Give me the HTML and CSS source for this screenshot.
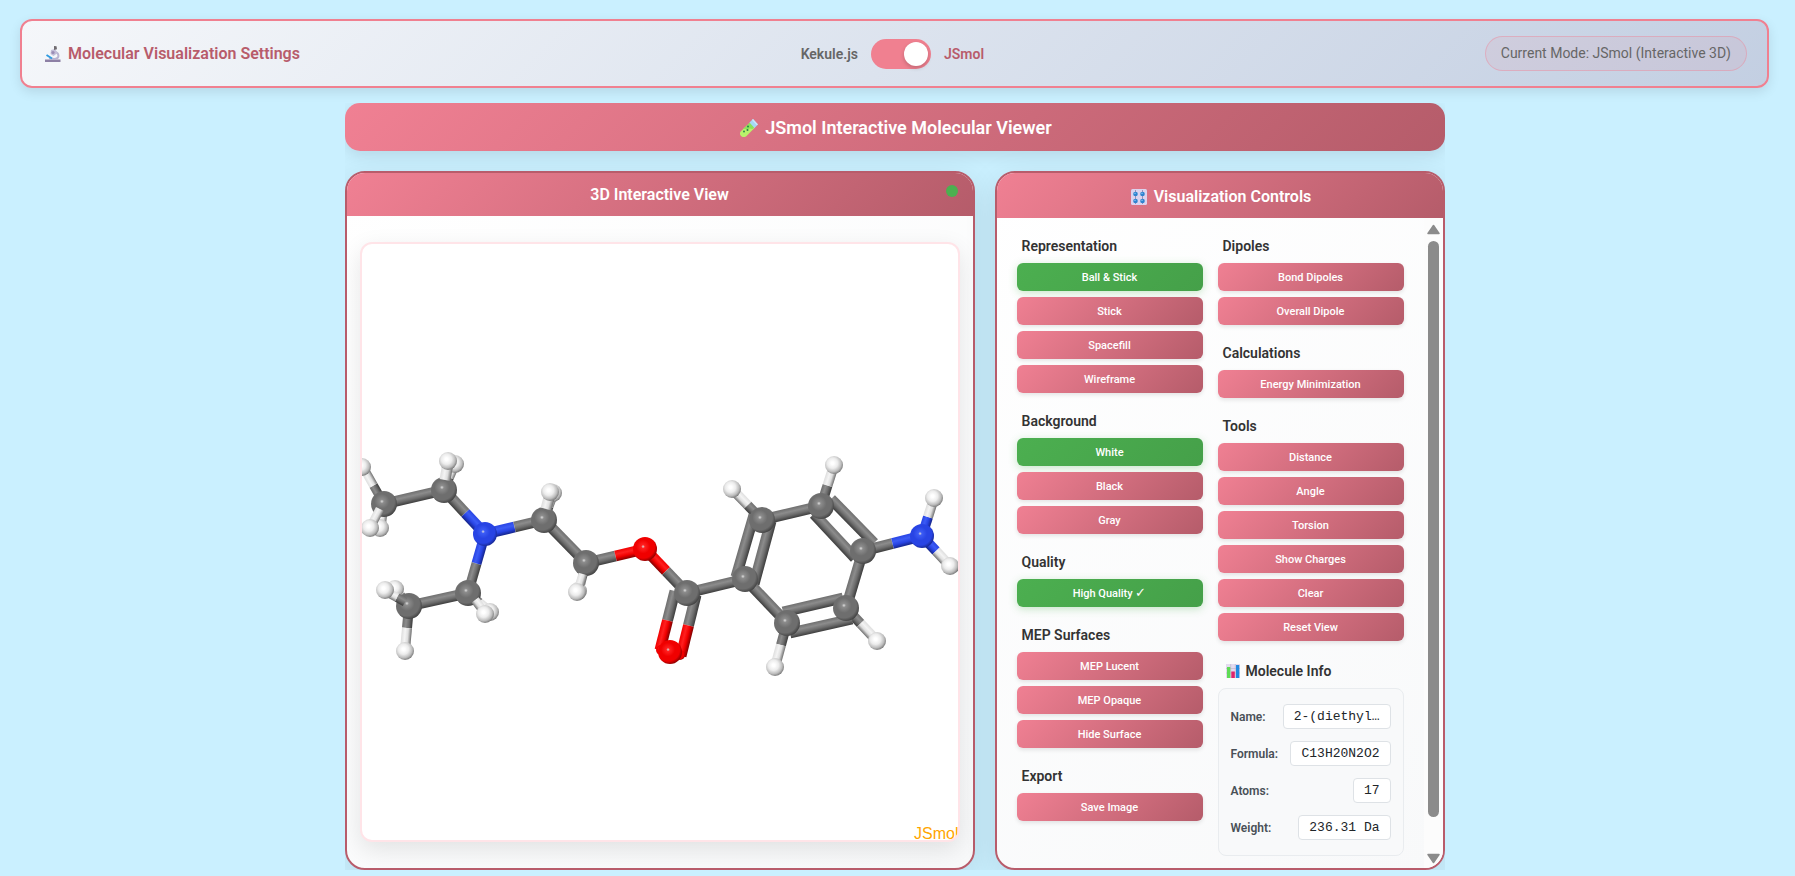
FILE: index.html
```html
<!DOCTYPE html>
<html lang="en">
<head>
<meta charset="utf-8">
<title>Molecular Viewer</title>
<link rel="stylesheet" href="styles.css">
</head>
<body>
<header class="settings">
  <h1 class="settings-title">
    <svg class="emoji emoji-16" viewBox="0 0 16 16" aria-hidden="true"><path d="M0 13.500h15.500V16H0z" fill="#8d80a5"/><path d="M9 5.500c5.500 1 6 7 1 7.500l-6-.2" fill="none" stroke="#b9b3d1" stroke-width="2"/><path d="M6 4l4-1 2.500 4-4 3-3-2z" fill="#c3bdd8"/><path d="M9 0l2.500.3.500 3-3 .7z" fill="#6f6b70"/><circle cx="8" cy="6.500" r="1.600" fill="#9a8db5"/><path d="M1.500 9l5.500 3.500" stroke="#2f9be0" stroke-width="2"/></svg>
    Molecular Visualization Settings
  </h1>
  <div class="mode-switch">
    <label for="engine">Kekule.js</label>
    <input class="toggle" type="checkbox" id="engine" role="switch" checked>
    <label for="engine" class="active">JSmol</label>
  </div>
  <div class="mode-pill">Current Mode: JSmol (Interactive 3D)</div>
</header>

<main class="viewer">
  <h2 class="viewer-title">
    <svg class="emoji emoji-18" viewBox="0 0 18 18" aria-hidden="true"><path d="M10 3.500l5 5-9 9q-3 1.500-5-.5t-.3-4.600z" fill="#b9f26b"/><path d="M3 10l7-6.500 4.500 4.500-2 2q-3-1-4 0t-3 0z" fill="#8ce05c"/><path d="M9.500 3.500L13 0l5 5.500-3.500 3.500z" fill="#a5d8f5"/><path d="M13 0l5 5.500-1.500.5L12 1z" fill="#cbeafc"/><circle cx="4" cy="12.500" r="1" fill="#2b8c4b"/><circle cx="7.500" cy="11" r="1" fill="#27824a"/><circle cx="8" cy="7.500" r="1" fill="#27824a"/></svg>
    JSmol Interactive Molecular Viewer
  </h2>
  <div class="panels">
    <section class="panel">
      <h3 class="panel-title">3D Interactive View<span class="status-dot"></span></h3>
      <div class="view-body">
        <div class="canvas">
          <svg id="molecule" class="molecule" viewBox="362 244 596 596" role="img" aria-label="Ball and stick model"></svg>
        </div>
      </div>
    </section>

    <section class="panel">
      <h3 class="panel-title with-icon">
        <svg class="emoji emoji-16" viewBox="0 0 16 16" aria-hidden="true"><rect width="16" height="16" rx="1.500" fill="#dcd3ee"/><path d="M4.500 1v14M11.500 1v14" stroke="#9c92b8"/><circle cx="4.500" cy="5" r="2.300" fill="#2f83cf"/><circle cx="11.500" cy="5" r="2.300" fill="#2f83cf"/><circle cx="4.500" cy="12" r="2.300" fill="#2f83cf"/><circle cx="11.500" cy="12" r="2.300" fill="#2f83cf"/><path d="M3 4.300h2M10 4.300h2M3 11.300h2M10 11.300h2" stroke="#75b9ee"/></svg>
        Visualization Controls
      </h3>
      <div class="controls-scroll">
        <div class="controls">
          <div class="column">
            <div class="group"><h4>Representation</h4>
              <button class="btn on">Ball &amp; Stick</button><button class="btn">Stick</button><button class="btn">Spacefill</button><button class="btn">Wireframe</button></div>
            <div class="group"><h4>Background</h4>
              <button class="btn on">White</button><button class="btn">Black</button><button class="btn">Gray</button></div>
            <div class="group"><h4>Quality</h4>
              <button class="btn on">High Quality <span class="tick">✓</span></button></div>
            <div class="group"><h4>MEP Surfaces</h4>
              <button class="btn">MEP Lucent</button><button class="btn">MEP Opaque</button><button class="btn">Hide Surface</button></div>
            <div class="group"><h4>Export</h4>
              <button class="btn">Save Image</button></div>
          </div>
          <div class="column">
            <div class="group"><h4>Dipoles</h4>
              <button class="btn">Bond Dipoles</button><button class="btn">Overall Dipole</button></div>
            <div class="group"><h4>Calculations</h4>
              <button class="btn">Energy Minimization</button></div>
            <div class="group"><h4>Tools</h4>
              <button class="btn">Distance</button><button class="btn">Angle</button><button class="btn">Torsion</button><button class="btn">Show Charges</button><button class="btn">Clear</button><button class="btn">Reset View</button></div>
            <div class="group">
              <h4 class="info-title"><svg class="emoji emoji-14" viewBox="0 0 14 14" aria-hidden="true"><rect width="14" height="14" fill="#e3dbef"/><path d="M0 4.500h14M0 9h14M4.700 0v14M9.300 0v14" stroke="#b9b0cd" stroke-width=".6"/><rect x="1" y="3" width="3.300" height="11" fill="#5fdc55"/><rect x="5.300" y="7.500" width="3.500" height="6.500" fill="#e0246c"/><rect x="10" y="1" width="3.300" height="13" fill="#2089e0"/></svg>Molecule Info</h4>
              <dl class="info">
                <div><dt>Name:</dt><dd>2-(diethyl…</dd></div>
                <div><dt>Formula:</dt><dd>C13H20N2O2</dd></div>
                <div><dt>Atoms:</dt><dd>17</dd></div>
                <div><dt>Weight:</dt><dd>236.31 Da</dd></div>
              </dl>
            </div>
          </div>
        </div>
        <div class="scrollbar" aria-hidden="true">
          <svg width="13" height="11" viewBox="0 0 13 11"><path d="M6.500 1.500L12 9.500H1z" fill="#8b8b8b" stroke="#8b8b8b" stroke-width="1.500" stroke-linejoin="round"/></svg>
          <div class="track"><div class="thumb"></div></div>
          <svg width="13" height="11" viewBox="0 0 13 11"><path d="M6.500 9.500L12 1.500H1z" fill="#8b8b8b" stroke="#8b8b8b" stroke-width="1.500" stroke-linejoin="round"/></svg>
        </div>
      </div>
    </section>
  </div>
</main>
<script src="molecule.js"></script>
</body>
</html>
```
FILE: styles.css
```css
* { box-sizing: border-box; }

body {
  margin: 0;
  padding: 19px 26px 6px 20px;
  background: #caf0ff;
  font-family: Roboto, "Liberation Sans", sans-serif;
  color: #333;
}

h1, h2, h3, h4, dl, dd { margin: 0; }

.emoji { flex: none; margin: 0 3px; }
.emoji-14 { width: 14px; height: 14px; }
.emoji-16 { width: 16px; height: 16px; }
.emoji-18 { width: 18px; height: 18px; }

.settings {
  display: flex;
  align-items: center;
  justify-content: space-between;
  padding: 15px 20px;
  border: 2px solid #f08090;
  border-radius: 12px;
  background: linear-gradient(135deg, #f5f7fa, #c3cfe2);
  box-shadow: 0 4px 12px rgba(0, 0, 0, .1);
}

.settings-title {
  display: flex;
  align-items: center;
  gap: 4px;
  color: #b85c6b;
  font-size: 16px;
  font-weight: 600;
}

.mode-switch {
  display: flex;
  align-items: center;
  gap: 13px;
  color: #666;
  font-size: 14px;
  font-weight: 600;
}
.mode-switch .active { color: #b85c6b; }

.toggle {
  appearance: none;
  display: flex;
  justify-content: flex-end;
  width: 60px;
  height: 30px;
  margin: 0;
  padding: 3px;
  border-radius: 15px;
  background: #f08090;
}
.toggle::before {
  content: "";
  width: 24px;
  height: 24px;
  border-radius: 50%;
  background: #fff;
  box-shadow: 0 2px 4px rgba(0, 0, 0, .2);
}

.mode-pill {
  padding: 8px 15px;
  border: 1px solid rgba(240, 128, 144, .4);
  border-radius: 20px;
  background: rgba(240, 128, 144, .1);
  color: #666;
  font-size: 14px;
  line-height: 17px;
}

.viewer {
  max-width: 1100px;
  margin: 15px auto 0;
  overflow: hidden;
}

.viewer-title {
  display: flex;
  align-items: center;
  justify-content: center;
  gap: 4px;
  padding: 13px 12px 11px;
  border-radius: 15px;
  background: linear-gradient(135deg, #f08093, #b55c6a);
  box-shadow: 0 4px 15px rgba(0, 0, 0, .1);
  color: #fff;
  font-size: 18px;
  font-weight: 600;
  line-height: 24px;
}

.panels {
  display: grid;
  grid-template-columns: 7fr 5fr;
  gap: 20px;
  margin-top: 20px;
}

.panel {
  display: flex;
  flex-direction: column;
  overflow: hidden;
  border: 2px solid #b85c6b;
  border-radius: 20px;
  background: linear-gradient(145deg, #fff, #f8f9fa);
  box-shadow: 0 8px 32px rgba(0, 0, 0, .1);
}

.panel-title {
  position: relative;
  display: flex;
  align-items: center;
  justify-content: center;
  gap: 4px;
  padding: 12px 15px;
  background: linear-gradient(135deg, #f08093, #b55c6a);
  color: #fff;
  font-size: 16px;
  font-weight: 600;
  line-height: 19px;
}
.panel-title.with-icon {
  padding: 13px 15px 11px;
  line-height: 21px;
}

.status-dot {
  position: absolute;
  top: 12px;
  right: 15px;
  width: 12px;
  height: 12px;
  border-radius: 50%;
  background: #4caf50;
}

.view-body { padding: 26px 13px; }

.canvas {
  overflow: hidden;
  border: 2px solid #ffe4e8;
  border-radius: 12px;
  background: #fff;
  box-shadow: 0 8px 24px rgba(0, 0, 0, .1);
}
.molecule { display: block; width: 100%; }
.credit { font: 16px "Liberation Sans", Arial, sans-serif; fill: #ffa500; }

.controls-scroll { display: flex; flex: 1; }

.controls {
  flex: 1;
  display: grid;
  grid-template-columns: 1fr 1fr;
  gap: 15px;
  padding: 20px 20px 0;
}

.column, .group { display: flex; flex-direction: column; }
.column { gap: 20px; min-width: 0; }
.group { gap: 6px; }

.group h4 {
  margin-bottom: 2px;
  padding-left: 5px;
  font-size: 14px;
  font-weight: 600;
  line-height: 17px;
}
.group .info-title {
  display: flex;
  align-items: center;
  gap: 3px;
  padding-top: 1px;
  line-height: 18px;
}

.btn {
  height: 28px;
  padding: 0 12px;
  border: 0;
  border-radius: 6px;
  background: linear-gradient(135deg, #f08093, #b55c6a);
  box-shadow: 0 2px 4px rgba(0, 0, 0, .1);
  color: #fff;
  font: 500 11px Roboto, "Liberation Sans", sans-serif;
}
.btn.on {
  background: linear-gradient(135deg, #4caf50, #45a049);
  box-shadow: 0 2px 8px rgba(76, 175, 80, .3);
}
.tick { font-size: 13px; line-height: 11px; }

.info {
  display: grid;
  gap: 12px;
  padding: 15px 12px;
  border: 1px solid #e9ecef;
  border-radius: 8px;
  background: #f8f9fa;
  font-size: 12px;
}
.info div {
  display: flex;
  align-items: center;
  justify-content: space-between;
}
.info dt { color: #495057; font-weight: 600; }
.info dd {
  padding: 4px 10px;
  border: 1px solid #dee2e6;
  border-radius: 4px;
  background: #fff;
  color: #212529;
  font: 13px/15px "Liberation Mono", "Courier New", monospace;
  white-space: nowrap;
}

.scrollbar {
  display: flex;
  flex-direction: column;
  align-items: center;
  gap: 6px;
  width: 19px;
  padding: 6px 2px 4px;
  background: #fcfcfc;
}
.track { flex: 1; }
.thumb {
  width: 11px;
  height: 95%;
  border-radius: 6px;
  background: #8b8b8b;
}
```
FILE: molecule.js
```js
const NS = "http://www.w3.org/2000/svg";
const svg = document.getElementById("molecule");
const tones = {
  C: ["#8c8c8c", "#6e6e6e", "#3c3c3c"],
  N: ["#3c5cf5", "#2844e4", "#14248a"],
  O: ["#ff2020", "#f00000", "#800000"],
  H: ["#ffffff", "#dedede", "#6e6e6e"]
};
const radius = { C: 13, N: 12, O: 12, H: 9 };

function add(parent, tag, attrs) {
  const el = document.createElementNS(NS, tag);
  for (const k in attrs) el.setAttribute(k, attrs[k]);
  parent.appendChild(el);
  return el;
}

function stops(grad, list) {
  for (const [offset, color] of list) add(grad, "stop", { offset, "stop-color": color });
}

const defs = add(svg, "defs", {});
for (const k in tones) {
  const [light, mid, dark] = tones[k];
  stops(add(defs, "radialGradient", { id: "atom" + k, cx: .42, cy: .4, r: .64 }), [
    [0, k === "H" ? "#fff" : "#dddddd"], [.12, k === "H" ? "#fff" : light],
    [.45, k === "H" ? "#ececec" : mid], [.75, k === "H" ? "#bcbcbc" : mid], [1, dark]
  ]);
}

let count = 0;
function rod(x1, y1, x2, y2, kind, width) {
  const len = Math.hypot(x2 - x1, y2 - y1);
  let nx = -(y2 - y1) / len, ny = (x2 - x1) / len;
  if (nx + ny * 1.5 < 0) { nx = -nx; ny = -ny; }
  const h = width / 2, id = "rod" + count++;
  const [light, mid, dark] = tones[kind];
  const grad = add(defs, "linearGradient", {
    id, gradientUnits: "userSpaceOnUse",
    x1: x1 - nx * h, y1: y1 - ny * h, x2: x1 + nx * h, y2: y1 + ny * h
  });
  stops(grad, [[0, mid], [.35, kind === "H" ? "#f4f4f4" : light], [.65, mid], [1, dark]]);
  const p = [[x1 - nx * h, y1 - ny * h], [x2 - nx * h, y2 - ny * h], [x2 + nx * h, y2 + ny * h], [x1 + nx * h, y1 + ny * h]];
  add(svg, "polygon", { points: p.join(" "), fill: `url(#${id})` });
}

function bond(a, b, x1, y1, x2, y2, split = .5, width = 10) {
  const mx = x1 + (x2 - x1) * split, my = y1 + (y2 - y1) * split;
  if (a === b) return rod(x1, y1, x2, y2, a, width);
  rod(x1, y1, mx, my, a, width);
  rod(mx, my, x2, y2, b, width);
}

function atom(kind, x, y, r = radius[kind]) {
  add(svg, "circle", { cx: x, cy: y, r, fill: `url(#atom${kind})` });
}

/* diethylamino group */
bond("C", "H", 384, 504, 363, 467, .5, 9); atom("H", 362, 467);
bond("C", "H", 384, 504, 381, 528, .5, 9); atom("H", 380, 528);
bond("C", "C", 384, 504, 444, 490, .5, 11); atom("C", 384, 504);
bond("H", "H", 380, 509, 371, 526, .5, 9); atom("H", 370, 528);
bond("C", "H", 444, 490, 455, 465, .5, 9); atom("H", 455, 464);
bond("C", "N", 444, 490, 485, 534, .52, 11); atom("C", 444, 490);
bond("H", "H", 445, 480, 448, 463, .5, 11); atom("H", 448, 461);

bond("C", "H", 409, 606, 395, 588, .6, 9); atom("H", 395, 589);
bond("C", "C", 409, 606, 468, 593, .5, 11);
bond("C", "H", 409, 606, 405, 650, .5);
atom("C", 409, 606); atom("H", 405, 651);
bond("C", "H", 405, 602, 385, 591, .4, 9); atom("H", 385, 590);
bond("C", "N", 468, 593, 485, 534, .5);
bond("C", "H", 468, 593, 491, 612, .5, 9); atom("H", 490, 612);
atom("C", 468, 593);
bond("H", "H", 475, 600, 485, 613, .5, 9); atom("H", 485, 614);

/* ethyl ester chain */
bond("N", "C", 485, 534, 544, 520, .5, 11); atom("N", 485, 534);
bond("C", "H", 544, 520, 554, 493, .5, 9); atom("H", 553, 493);
bond("C", "C", 544, 520, 586, 563, .5, 11); atom("C", 544, 520);
bond("H", "H", 546, 509, 550, 494, .5, 11); atom("H", 550, 492);
bond("C", "O", 586, 563, 645, 549, .5, 11);
bond("C", "H", 586, 563, 579, 591, .5, 9); atom("H", 578, 591);
atom("C", 586, 563);
bond("H", "H", 583, 574, 578, 590, .5, 9); atom("H", 577, 592);
bond("O", "C", 645, 549, 687, 593, .5, 11); atom("O", 645, 549);
bond("C", "O", 675, 591, 660, 650, .5, 11);
bond("C", "O", 696, 595, 681, 656, .5, 11);
atom("O", 661, 650, 5); atom("O", 680, 655, 5);
bond("C", "C", 687, 593, 745, 579, .5, 11); atom("C", 687, 593);
atom("O", 670, 652);

/* aminobenzene ring */
bond("C", "H", 762, 520, 732, 489, .48);
bond("C", "H", 821, 506, 834, 465, .5);
bond("C", "H", 846, 608, 877, 641, .47);
bond("C", "H", 787, 623, 775, 667, .5);
bond("C", "C", 754, 515, 736, 577, .5, 11);
bond("C", "C", 771, 521, 754, 584, .5, 11);
bond("C", "C", 762, 520, 821, 506, .5, 11);
bond("C", "C", 831, 499, 874, 543, .5, 11);
bond("C", "C", 814, 514, 855, 558, .5, 11);
bond("C", "C", 863, 551, 846, 608, .5, 11);
bond("C", "C", 783, 612, 843, 598, .5, 11);
bond("C", "C", 790, 633, 852, 619, .5, 11);
bond("C", "C", 787, 623, 745, 579, .5, 11);
bond("C", "N", 863, 551, 922, 536, .5, 11);
for (const [x, y] of [[745, 579], [762, 520], [821, 506], [863, 551], [846, 608], [787, 623]]) atom("C", x, y);
bond("N", "H", 922, 536, 934, 498, .5);
bond("N", "H", 922, 536, 950, 566, .5);
atom("N", 922, 536);
for (const [x, y] of [[732, 489], [834, 465], [877, 641], [775, 667], [934, 498], [950, 566]]) atom("H", x, y);

add(svg, "text", { x: 914, y: 839, class: "credit" }).textContent = "JSmol";
```
